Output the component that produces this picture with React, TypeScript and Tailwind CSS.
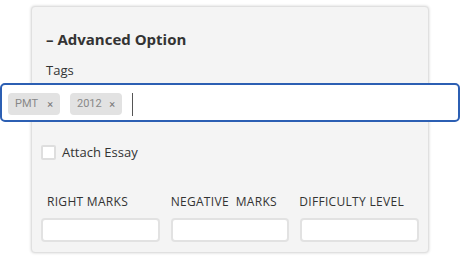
const tags = ['PMT', '2012'];

const fields = [
  { label: 'RIGHT MARKS', pad: 'pl-[6px]' },
  { label: 'NEGATIVE  MARKS', pad: 'pl-0' },
  { label: 'DIFFICULTY LEVEL', pad: '-ml-[1px]' },
];

export default function App() {
  return (
    <div className="min-h-[261px] w-[460px] bg-white pt-[6px] font-['Open_Sans',sans-serif]">
      {/* Panel */}
      <div className="ml-[31px] w-[398px] rounded-[4px] border border-[#e0e0e0] bg-[#f4f4f4] px-[9px] pt-[22px] pb-[10px] shadow-[0_0_3px_rgba(0,0,0,0.18)]">
        <h2 className="pl-[5px] text-[15px] leading-[20px] font-bold text-[#333]">
          – Advanced Option
        </h2>
        <div className="mt-[12px] pl-[5px] text-[13px] leading-[18px] text-[#333]">Tags</div>

        {/* Tag input (focused, wider than the panel) */}
        <div className="mt-[4px] -ml-[41px] flex h-[39px] w-[460px] items-start gap-[10px] rounded-[5px] border-2 border-[#2c5fb3] bg-white pt-[8px] pl-[6px]">
          {tags.map((t) => (
            <span
              key={t}
              className="flex h-[22px] w-[52px] items-center rounded-[4px] bg-[#e2e2e2] px-[7px] font-['Roboto',sans-serif] text-[11px] text-[#888]"
            >
              <span className="flex-1 whitespace-nowrap">{t}</span>
              <span className="text-[11px] leading-none text-[#777]">×</span>
            </span>
          ))}
          <span className="h-[23px] w-px bg-[#555]" />
        </div>

        <label className="mt-[23px] flex h-[15px] items-center gap-[6px]">
          <span className="h-[15px] w-[15px] rounded-[2px] border-2 border-[#dedede] bg-white" />
          <span className="text-[13px] leading-[15px] text-[#333]">Attach Essay</span>
        </label>

        <div className="mt-[34px] grid grid-cols-3 gap-[11px]">
          {fields.map((f) => (
            <div key={f.label}>
              <div
                className={`${f.pad} whitespace-pre text-[12px] leading-[16px] tracking-[0.3px] text-[#333]`}
              >
                {f.label}
              </div>
              <div className="mt-[8px] h-[24px] rounded-[4px] border-2 border-[#e2e2e2] bg-white" />
            </div>
          ))}
        </div>
      </div>
    </div>
  );
}
